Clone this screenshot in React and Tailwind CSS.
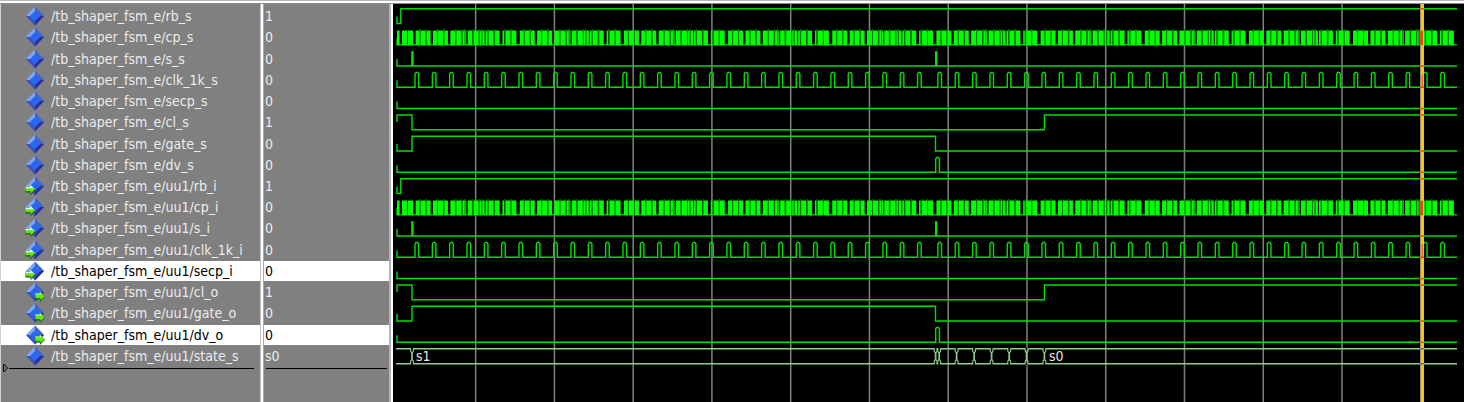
import React from "react";

const SIGNALS = [
  { name: "/tb_shaper_fsm_e/rb_s", value: "1", dir: "none" },
  { name: "/tb_shaper_fsm_e/cp_s", value: "0", dir: "none" },
  { name: "/tb_shaper_fsm_e/s_s", value: "0", dir: "none" },
  { name: "/tb_shaper_fsm_e/clk_1k_s", value: "0", dir: "none" },
  { name: "/tb_shaper_fsm_e/secp_s", value: "0", dir: "none" },
  { name: "/tb_shaper_fsm_e/cl_s", value: "1", dir: "none" },
  { name: "/tb_shaper_fsm_e/gate_s", value: "0", dir: "none" },
  { name: "/tb_shaper_fsm_e/dv_s", value: "0", dir: "none" },
  { name: "/tb_shaper_fsm_e/uu1/rb_i", value: "1", dir: "in" },
  { name: "/tb_shaper_fsm_e/uu1/cp_i", value: "0", dir: "in" },
  { name: "/tb_shaper_fsm_e/uu1/s_i", value: "0", dir: "in" },
  { name: "/tb_shaper_fsm_e/uu1/clk_1k_i", value: "0", dir: "in" },
  { name: "/tb_shaper_fsm_e/uu1/secp_i", value: "0", dir: "in", selected: true },
  { name: "/tb_shaper_fsm_e/uu1/cl_o", value: "1", dir: "out" },
  { name: "/tb_shaper_fsm_e/uu1/gate_o", value: "0", dir: "out" },
  { name: "/tb_shaper_fsm_e/uu1/dv_o", value: "0", dir: "out", selected: true },
  { name: "/tb_shaper_fsm_e/uu1/state_s", value: "s0", dir: "none" },
];

const ROW_PITCH = 21.25;
const START = 4;
const END = 1064;
const AMPLITUDE = 14.8;
const CURSOR = 1029;

function SignalIcon({ dir }) {
  return (
    <svg className="h-5 w-5 shrink-0" viewBox="0 0 20 20" aria-hidden="true">
      <path d="M10 0.6 0.8 10H5.5L10 5.4Z" fill="#7ea6f2" />
      <path d="M10 0.6 19.2 10H14.5L10 5.4Z" fill="#3f63cf" />
      <path d="M0.8 10 10 19.4V14.6L5.5 10Z" fill="#3c55bd" />
      <path d="M19.2 10 10 19.4V14.6L14.5 10Z" fill="#2c2ca0" />
      <path d="M10 5 15 10 10 15 5 10Z" fill="#2468f6" />
      {dir === "in" && (
        <g>
          <path d="M0.5 10.6H5V8.6L10.4 13.8 5.6 19.2V16.4H0.5Z" fill="#145a12" />
          <path d="M0.5 10.4H5V8.4L10 13H0.5Z" fill="#dff2f4" />
          <path d="M0.5 12.2H9.2L10 13.2 5.8 17.4V15.2H0.5Z" fill="#5fe60a" />
        </g>
      )}
      {dir === "out" && (
        <g>
          <path d="M10.2 11.8H14.6V9.6L20 14.8 14.9 20V17.6H10.2Z" fill="#145a12" />
          <path d="M10.4 11.6H14.8V9.8L19.6 14.4 15.4 18.2V16.2H10.4Z" fill="#5fe60a" />
          <path d="M10.4 11.6H14.8V9.8L17.4 12.4H10.4Z" fill="#c6f58a" />
        </g>
      )}
    </svg>
  );
}

function NameColumn() {
  return (
    <section aria-label="Signals" className="w-[263px] shrink-0 border-l border-r-2 border-l-[#d4d2d4] border-r-white bg-[#808080]">
      <div className="h-full border-r border-[#c4c2c4]">
        <ul className="flex h-[363px] flex-col pt-0.5">
          {SIGNALS.map((s) => (
            <li
              key={s.name}
              className={
                s.selected
                  ? "flex flex-1 items-center gap-1.5 border-b border-[#808080] bg-white pl-6 text-black"
                  : "flex flex-1 items-center gap-1.5 border-b border-[#808080] pl-6 text-[#ececec]"
              }
            >
              <SignalIcon dir={s.dir} />
              <span className="whitespace-nowrap">{s.name}</span>
            </li>
          ))}
        </ul>
        <div className="flex h-0.5 items-center pl-0.5">
          <svg className="h-2.5 w-1.5 shrink-0" viewBox="0 0 6 10" aria-hidden="true">
            <path d="M0.7 1 4.6 5 0.7 9Z" fill="#808080" stroke="#000" />
          </svg>
          <div className="mr-1.5 h-px flex-1 bg-black" />
        </div>
      </div>
    </section>
  );
}

function ValueColumn() {
  return (
    <section aria-label="Values" className="w-[130px] shrink-0 border-l border-r-2 border-l-[#a8a8a8] border-r-white bg-[#808080]">
      <div className="h-full border-r-2 border-[#b4b2b4]">
        <ul className="flex h-[363px] flex-col pt-0.5">
          {SIGNALS.map((s) => (
            <li
              key={s.name}
              className={
                s.selected
                  ? "flex flex-1 items-center border-b border-[#808080] bg-white pl-px text-black"
                  : "flex flex-1 items-center border-b border-[#808080] pl-px text-[#ececec]"
              }
            >
              {s.value}
            </li>
          ))}
        </ul>
        <div className="flex h-0.5 items-center px-0.5">
          <div className="h-px flex-1 bg-black" />
        </div>
      </div>
    </section>
  );
}

const pulseCenters = [
  ...Array.from({ length: 30 }, (_, k) => 23.8 + k * 17.33),
  ...Array.from({ length: 30 }, (_, k) => 546.7 + k * 17.34),
];

function slowClock(lo, hi) {
  let d = `M${START} ${lo - 7}V${lo}`;
  pulseCenters.forEach((c) => {
    d += `H${c - 1.8}V${hi + 1.5}L${c - 0.8} ${hi}H${c + 0.8}L${c + 1.8} ${hi + 1.5}V${lo}`;
  });
  return `${d}H${END}`;
}

const BURSTS = [
  [[0, 4], [5, 10], [11, 15]],
  [[0, 4], [5, 10], [11.3, 15]],
  [[0, 5], [6, 11], [12.3, 14.3], [15, 16]],
  [[0, 4.6], [6, 11], [12, 13.6], [14.6, 17]],
  [[0.6, 2.4], [3.6, 8.6], [10, 14.6]],
  [[0, 1.6], [3, 8], [9, 14]],
];

function FastClock({ lo }) {
  const bars = [[START, 6.6], [9, 14], [15, 20]];
  const tips = [];
  for (let k = 0; k < 61; k += 1) {
    const base = 22.6 + k * 17.36;
    BURSTS[k % BURSTS.length].forEach(([a, b], i) => {
      if (base + a < END) bars.push([base + a, Math.min(base + b, END)]);
      if (i > 0 && base + a < END) tips.push(base + a - 1.2);
    });
  }
  return (
    <g>
      <path d={`M${START} ${lo - 7}V${lo}H${END}`} fill="none" stroke="#00c000" strokeWidth="1.4" />
      {tips.map((x, i) => (
        <rect key={i} x={x} y={lo - AMPLITUDE - 1} width="1.4" height={AMPLITUDE + 1} fill="#006c00" />
      ))}
      {bars.map(([a, b], i) => (
        <rect key={i} x={a} y={lo - AMPLITUDE + 0.6} width={b - a} height={AMPLITUDE - 0.2} fill="#00ff00" />
      ))}
    </g>
  );
}

function Trace({ d }) {
  return <path d={d} fill="none" stroke="#00e000" strokeWidth="1.4" />;
}

function SignalGroup({ first }) {
  const lo = (i) => 19.5 + (first + i) * ROW_PITCH;
  const hi = (i) => lo(i) - AMPLITUDE;
  return (
    <g>
      <Trace d={`M${START} ${lo(0) - 7}V${lo(0)}H7.8V${hi(0)}H${END}`} />
      <FastClock lo={lo(1)} />
      <Trace d={`M${START} ${lo(2) - 7}V${lo(2)}H${END}`} />
      <rect x="18.2" y={hi(2)} width="2.4" height={AMPLITUDE} fill="#00e800" />
      <rect x="542" y={hi(2)} width="2.4" height={AMPLITUDE} fill="#00e800" />
      <Trace d={slowClock(lo(3), hi(3))} />
      <Trace d={`M${START} ${lo(4) - 7}V${lo(4)}H${END}`} />
      <Trace d={`M${START} ${hi(5) + 7}V${hi(5)}H19V${lo(5)}H651.4V${hi(5)}H${END}`} />
      <Trace d={`M${START} ${lo(6) - 7}V${lo(6)}H19V${hi(6)}H542.5V${lo(6)}H${END}`} />
      <Trace d={`M${START} ${lo(7) - 7}V${lo(7)}H542.7V${hi(7) + 1.5}L543.6 ${hi(7)}H545.4L546.4 ${hi(7) + 1.5}V${lo(7)}H${END}`} />
    </g>
  );
}

const STATE_CHANGES = [19, 542.6, 546.2, 563.6, 581.1, 598.6, 616.2, 633.6, 651.4];

function StateBus({ top, bottom }) {
  return (
    <g fill="none" stroke="#8fce8f" strokeWidth="1.4">
      <path d={`M${START - 1} ${top}H${END}M${START - 1} ${bottom}H${END}`} />
      {STATE_CHANGES.map((x) => (
        <g key={x}>
          <rect x={x - 1} y={top - 1} width="2" height="2" fill="#000" stroke="none" />
          <rect x={x - 1} y={bottom - 1} width="2" height="2" fill="#000" stroke="none" />
          <path
            strokeWidth="1.1"
            d={`M${x - 1.4} ${top}V${top + 2.6}L${x - 0.3} ${top + 4}V${bottom - 4}L${x - 1.4} ${bottom - 2.6}V${bottom}M${x + 1.4} ${top}V${top + 2.6}L${x + 0.3} ${top + 4}V${bottom - 4}L${x + 1.4} ${bottom - 2.6}V${bottom}`}
          />
        </g>
      ))}
    </g>
  );
}

function Waveforms() {
  const lows = SIGNALS.slice(0, 16).map((_, i) => 19.5 + i * ROW_PITCH);
  const rising = [0, 5, 8, 13];
  return (
    <section aria-label="Waveforms" className="min-w-0 flex-1 bg-black">
      <svg className="block h-full w-full" role="img" aria-label="Signal waveforms">
        {Array.from({ length: 13 }, (_, k) => (
          <rect key={k} x={81.9 + k * 78.76} y="0" width="1.5" height="100%" fill="#808080" />
        ))}
        <SignalGroup first={0} />
        <SignalGroup first={8} />
        <StateBus top={344.8} bottom={359.7} />
        <text x="23" y="357" fill="#e4e4e4" className="text-[14px]">s1</text>
        <text x="656" y="357" fill="#e4e4e4" className="text-[14px]">s0</text>
        <rect x={CURSOR - 2} y="0" width="1" height="100%" fill="#8c9470" />
        <rect x={CURSOR - 1} y="0" width="3" height="100%" fill="#f8c800" />
        {lows.map((lo, i) => {
          if (i % 8 === 1) {
            return <rect key={i} x={CURSOR - 1.5} y={lo - 14} width="2.4" height="14.4" fill="#ff3800" />;
          }
          const y = rising.includes(i) ? lo - AMPLITUDE : lo;
          return <rect key={i} x={CURSOR - 2} y={y - 0.7} width="4" height="1.5" fill="#ff4400" />;
        })}
        <rect x={CURSOR - 0.3} y={lows[3] - 13} width="1.2" height="13" fill="#ff5a00" />
        <rect x={CURSOR - 0.3} y={lows[11] - 13} width="1.2" height="13" fill="#ff5a00" />
        <rect x={CURSOR - 2} y="344" width="4" height="1.5" fill="#7060a0" />
        <rect x={CURSOR - 2} y="359" width="4" height="1.5" fill="#7060a0" />
      </svg>
    </section>
  );
}

export default function App() {
  return (
    <main className="flex h-screen w-full flex-col overflow-hidden bg-black font-['DejaVu_Sans_Condensed','Noto_Sans',sans-serif] text-[14px] leading-4">
      <div className="h-1 shrink-0 border-b border-t border-b-[#8a8a8a] border-t-[#b8b4b8] bg-white" />
      <div className="flex min-h-0 flex-1">
        <NameColumn />
        <ValueColumn />
        <Waveforms />
      </div>
    </main>
  );
}
